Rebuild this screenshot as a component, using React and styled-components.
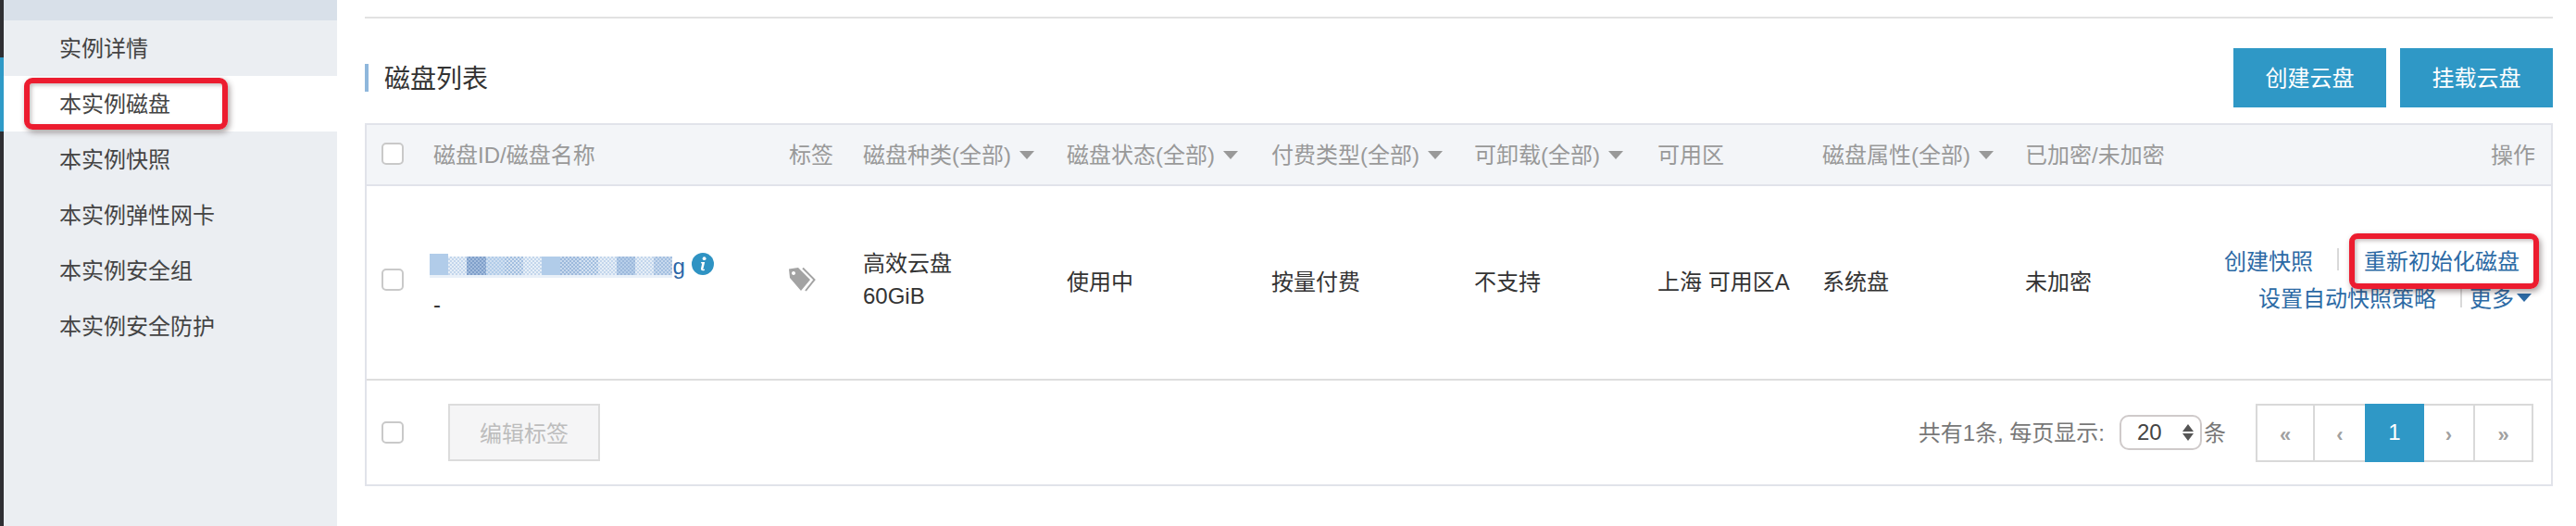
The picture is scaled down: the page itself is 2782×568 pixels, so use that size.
import React from "react";
import styled, { createGlobalStyle } from "styled-components";

const Global = createGlobalStyle`
  html, body { margin: 0; padding: 0; background: #fff; }
  * { box-sizing: border-box; }
  body { font-family: "Liberation Sans", "Noto Sans CJK SC", sans-serif; font-size: 24px; color: #333; }
`;

const COLS = "56px 384px 80px 220px 221px 219px 198px 178px 219px 200px 1fr";

const Page = styled.div`
  position: relative;
  display: flex;
  width: 2782px;
  height: 568px;
  overflow: hidden;
`;
const Rail = styled.div`
  width: 4px;
  display: flex;
  flex-direction: column;
  background: #2f2f33;
`;
const RailMark = styled.div`
  margin-top: 62px;
  height: 80px;
  background: #2f9ac7;
`;
const Sidebar = styled.nav`
  width: 360px;
  background: #ebeef2;
  display: flex;
  flex-direction: column;
`;
const SideTop = styled.div`
  height: 22px;
  background: #d8e0e9;
`;
const SideItem = styled.div`
  height: 60px;
  display: flex;
  align-items: center;
  padding: 0 0 4px 60px;
  font-size: 24px;
  color: #444;
  background: ${(p) => (p.$active ? "#fff" : "transparent")};
`;
const Main = styled.main`
  flex: 1;
  padding: 18px 25px 0 30px;
`;
const TopRule = styled.div`
  height: 2px;
  background: #e2e2e2;
`;
const Toolbar = styled.div`
  display: flex;
  align-items: center;
  justify-content: space-between;
  margin-top: 32px;
  height: 64px;
`;
const Title = styled.h2`
  margin: 0;
  height: 30px;
  display: flex;
  align-items: center;
  padding: 0 0 3px 17px;
  border-left: 4px solid #8fb7dc;
  font-size: 28px;
  font-weight: 400;
  color: #333;
`;
const ToolButtons = styled.div`
  display: flex;
  gap: 15px;
`;
const PrimaryButton = styled.div`
  width: 165px;
  height: 64px;
  padding-bottom: 3px;
  background: #2f98c6;
  color: #fff;
  display: flex;
  align-items: center;
  justify-content: center;
  font-size: 24px;
`;
const Table = styled.div`
  margin-top: 17px;
  border: 2px solid #e1e3ea;
`;
const HeadRow = styled.div`
  display: grid;
  grid-template-columns: ${COLS};
  height: 66px;
  padding-bottom: 3px;
  background: #f3f5f8;
  border-bottom: 2px solid #e1e3ea;
  color: #999;
  align-items: center;
`;
const BodyRow = styled.div`
  display: grid;
  grid-template-columns: ${COLS};
  height: 210px;
  border-bottom: 2px solid #dedede;
  align-items: center;
  color: #333;
  padding-bottom: 6px;
`;
const Cell = styled.div`
  padding-left: 16px;
  display: flex;
  align-items: center;
  white-space: nowrap;
`;
const RightCell = styled(Cell)`
  justify-content: flex-end;
  padding: 0 17px 0 0;
`;
const Caret = styled.span`
  width: 0;
  height: 0;
  margin-left: ${(p) => p.$gap ?? 9}px;
  margin-top: 3px;
  border-left: 8px solid transparent;
  border-right: 8px solid transparent;
  border-top: 9px solid ${(p) => p.$color || "#999"};
`;
const Check = styled.span`
  display: block;
  width: 24px;
  height: 24px;
  border: 2px solid #c9c9c9;
  border-radius: 5px;
  background: #fff;
`;
const Stack = styled.div`
  display: flex;
  flex-direction: column;
  line-height: 35px;
  margin-top: 12px;
`;
const NameLine = styled.div`
  display: flex;
  align-items: center;
  height: 30px;
  margin-left: -4px;
`;
const Blur = styled.div`
  display: flex;
  height: 20px;
  box-shadow: 0 3px 0 #e9f0f8;
`;
const BlurSeg = styled.span`
  width: 20.2px;
  background: ${(p) =>
    p.$d
      ? `repeating-conic-gradient(${p.$c} 0 25%, ${p.$d} 0 50%) 0 0 / 4px 4px`
      : p.$c};
`;
const BlurHead = styled(BlurSeg)`
  margin-top: -3px;
`;
const NameEnd = styled.span`
  color: #2d67a8;
  font-size: 24px;
`;
const InfoBadge = styled.span`
  margin-left: 7px;
  margin-top: -4px;
  display: flex;
`;
const Dash = styled.div`
  margin-top: 12px;
  font-size: 24px;
  line-height: 30px;
  color: #333;
`;
const TwoLines = styled.div`
  line-height: 35px;
`;
const Actions = styled.div`
  display: flex;
  flex-direction: column;
  align-items: flex-end;
  width: 100%;
  margin-top: -4px;
`;
const ActionLine = styled.div`
  display: flex;
  align-items: center;
  height: 40px;
  padding-right: ${(p) => p.$pad || 0}px;
`;
const Link = styled.span`
  color: #2c6aa5;
  font-size: 24px;
`;
const Sep = styled.span`
  width: 2px;
  height: 24px;
  background: #d9d9d9;
  margin: 0 ${(p) => p.$r}px 0 ${(p) => p.$l}px;
`;
const FootRow = styled.div`
  height: 112px;
  display: flex;
  align-items: center;
  padding: 0 19px 0 16px;
`;
const GhostButton = styled.div`
  margin-left: 48px;
  width: 164px;
  height: 62px;
  padding-bottom: 2px;
  background: #f5f5f6;
  border: 2px solid #dcdcdc;
  color: #bdbdbd;
  display: flex;
  align-items: center;
  justify-content: center;
`;
const FootRight = styled.div`
  margin-left: auto;
  display: flex;
  align-items: center;
  color: #777;
`;
const FootText = styled.span`
  margin-top: -4px;
`;
const PageSize = styled.div`
  width: 89px;
  height: 38px;
  margin-left: 16px;
  padding: 0 7px 0 17px;
  border: 2px solid #cfcaca;
  border-radius: 10px;
  display: flex;
  align-items: center;
  justify-content: space-between;
  color: #444;
`;
const Spinner = styled.span`
  display: flex;
  flex-direction: column;
  gap: 2px;
`;
const SpinUp = styled.span`
  border-left: 6px solid transparent;
  border-right: 6px solid transparent;
  border-bottom: 8px solid #555;
`;
const SpinDown = styled.span`
  border-left: 6px solid transparent;
  border-right: 6px solid transparent;
  border-top: 8px solid #555;
`;
const Unit = styled(FootText)`
  margin-left: 2px;
`;
const Pager = styled.div`
  margin-left: 32px;
  display: flex;
  height: 63px;
  border: 2px solid #d9d9d9;
`;
const PageCell = styled.div`
  width: ${(p) => p.$w}px;
  display: flex;
  align-items: center;
  justify-content: center;
  padding-top: ${(p) => (p.$active ? 0 : 6)}px;
  margin: ${(p) => (p.$active ? "-2px 0" : 0)};
  background: ${(p) => (p.$active ? "#2f98c6" : "#fff")};
  color: ${(p) => (p.$active ? "#fff" : "#a0a0a0")};
  font-size: ${(p) => (p.$active ? 24 : 22)}px;
  font-weight: ${(p) => (p.$active ? 400 : 700)};
  border-right: ${(p) => (p.$line ? "2px solid #d9d9d9" : "none")};
`;
const Callout = styled.div`
  position: absolute;
  left: ${(p) => p.$x}px;
  top: ${(p) => p.$y}px;
  width: ${(p) => p.$w}px;
  height: ${(p) => p.$h}px;
  border: 6px solid #ec1c2f;
  border-radius: 9px;
  box-shadow: 2px 3px 6px rgba(60, 40, 40, 0.45), inset 2px 2px 4px rgba(60, 40, 40, 0.3);
`;

const TagIcon = () => (
  <svg width="30" height="26" viewBox="0 0 30 26">
    <path
      fillRule="evenodd"
      fill="#a3a3a3"
      d="M0 1.5 L10 0 L23 13 L13 25 L1 11 Z M5 4 a2 2 0 1 0 0.01 0 Z"
    />
    <path d="M15 0.5 L27.5 13 L18 25" fill="none" stroke="#a3a3a3" strokeWidth="2" />
  </svg>
);

const InfoIcon = () => (
  <svg width="24" height="24" viewBox="0 0 24 24">
    <circle cx="12" cy="12" r="12" fill="#2f93c3" />
    <circle cx="13.6" cy="6.2" r="1.9" fill="#fff" />
    <path d="M10.2 10 H14.2 L12.4 17.4 Q12.3 18.4 14 17.6 L13.9 19 Q9.6 20.2 10 17 L11.2 11.4 L10 11.2 Z" fill="#fff" />
  </svg>
);

const tones = [
  ["#c3d6ec", "#e6eef7"],
  ["#7f9fca", "#a4bddd"],
  ["#b1cce9", "#d0dff0"],
  ["#a3bfe0", "#d5e2f1"],
  ["#c3d6ec", "#e8f0f8"],
  ["#b1cce9"],
  ["#9db9dc", "#c8d9ed"],
  ["#a3bfe0", "#d5e2f1"],
  ["#c3d6ec", "#e6eef7"],
  ["#9db9dc", "#b8cfe9"],
  ["#c3d6ec", "#e6eef7"],
  ["#a3bfe0", "#c8d9ed"],
];
const menu = ["实例详情", "本实例磁盘", "本实例快照", "本实例弹性网卡", "本实例安全组", "本实例安全防护"];
const heads = [
  ["磁盘种类(全部)", true],
  ["磁盘状态(全部)", true],
  ["付费类型(全部)", true],
  ["可卸载(全部)", true],
  ["可用区", false],
  ["磁盘属性(全部)", true],
  ["已加密/未加密", false],
];

export default function App() {
  return (
    <Page>
      <Global />
      <Rail>
        <RailMark />
      </Rail>
      <Sidebar>
        <SideTop />
        {menu.map((m, i) => (
          <SideItem key={m} $active={i === 1}>{m}</SideItem>
        ))}
      </Sidebar>
      <Main>
        <TopRule />
        <Toolbar>
          <Title>磁盘列表</Title>
          <ToolButtons>
            <PrimaryButton>创建云盘</PrimaryButton>
            <PrimaryButton>挂载云盘</PrimaryButton>
          </ToolButtons>
        </Toolbar>
        <Table>
          <HeadRow>
            <Cell><Check /></Cell>
            <Cell>磁盘ID/磁盘名称</Cell>
            <Cell>标签</Cell>
            {heads.map(([t, c]) => (
              <Cell key={t}>{t}{c && <Caret />}</Cell>
            ))}
            <RightCell>操作</RightCell>
          </HeadRow>
          <BodyRow>
            <Cell><Check /></Cell>
            <Cell>
              <Stack>
                <NameLine>
                  <Blur>
                    <BlurHead $c="#b1cce9" />
                    {tones.map(([c, d], i) => <BlurSeg key={i} $c={c} $d={d} />)}
                  </Blur>
                  <NameEnd>g</NameEnd>
                  <InfoBadge><InfoIcon /></InfoBadge>
                </NameLine>
                <Dash>-</Dash>
              </Stack>
            </Cell>
            <Cell><TagIcon /></Cell>
            <Cell><TwoLines>高效云盘<br />60GiB</TwoLines></Cell>
            <Cell>使用中</Cell>
            <Cell>按量付费</Cell>
            <Cell>不支持</Cell>
            <Cell>上海 可用区A</Cell>
            <Cell>系统盘</Cell>
            <Cell>未加密</Cell>
            <Cell>
              <Actions>
                <ActionLine $pad={34}>
                  <Link>创建快照</Link>
                  <Sep $l={26} $r={27} />
                  <Link>重新初始化磁盘</Link>
                </ActionLine>
                <ActionLine $pad={21}>
                  <Link>设置自动快照策略</Link>
                  <Sep $l={26} $r={8} />
                  <Link>更多</Link>
                  <Caret $gap={3} $color="#2c6aa5" />
                </ActionLine>
              </Actions>
            </Cell>
          </BodyRow>
          <FootRow>
            <Check />
            <GhostButton>编辑标签</GhostButton>
            <FootRight>
              <FootText>共有1条, 每页显示:</FootText>
              <PageSize>
                20
                <Spinner><SpinUp /><SpinDown /></Spinner>
              </PageSize>
              <Unit>条</Unit>
              <Pager>
                <PageCell $w={62} $line>«</PageCell>
                <PageCell $w={54}>‹</PageCell>
                <PageCell $w={64} $active>1</PageCell>
                <PageCell $w={55} $line>›</PageCell>
                <PageCell $w={61}>»</PageCell>
              </Pager>
            </FootRight>
          </FootRow>
        </Table>
      </Main>
      <Callout $x={26} $y={84} $w={220} $h={56} />
      <Callout $x={2537} $y={252} $w={205} $h={60} />
    </Page>
  );
}
